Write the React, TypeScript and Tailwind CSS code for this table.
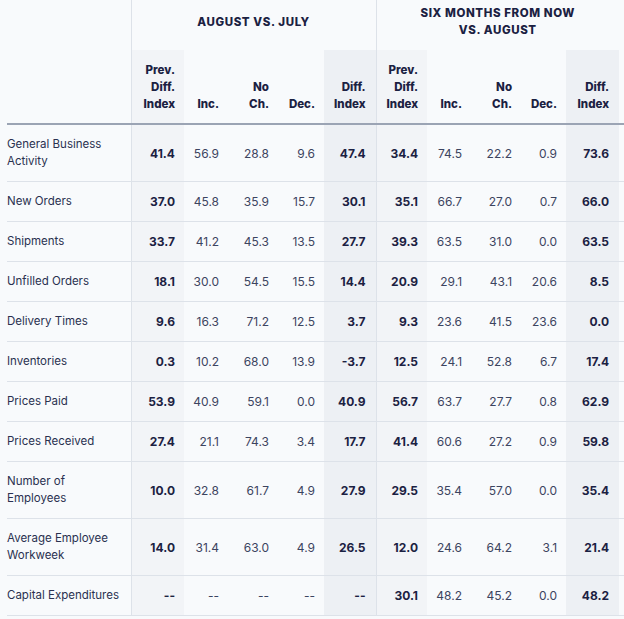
import React from 'react';

type Row = {
  label: string[];
  a: string[];
  b: string[];
};

const rows: Row[] = [
  { label: ['General Business', 'Activity'], a: ['41.4', '56.9', '28.8', '9.6', '47.4'], b: ['34.4', '74.5', '22.2', '0.9', '73.6'] },
  { label: ['New Orders'], a: ['37.0', '45.8', '35.9', '15.7', '30.1'], b: ['35.1', '66.7', '27.0', '0.7', '66.0'] },
  { label: ['Shipments'], a: ['33.7', '41.2', '45.3', '13.5', '27.7'], b: ['39.3', '63.5', '31.0', '0.0', '63.5'] },
  { label: ['Unfilled Orders'], a: ['18.1', '30.0', '54.5', '15.5', '14.4'], b: ['20.9', '29.1', '43.1', '20.6', '8.5'] },
  { label: ['Delivery Times'], a: ['9.6', '16.3', '71.2', '12.5', '3.7'], b: ['9.3', '23.6', '41.5', '23.6', '0.0'] },
  { label: ['Inventories'], a: ['0.3', '10.2', '68.0', '13.9', '-3.7'], b: ['12.5', '24.1', '52.8', '6.7', '17.4'] },
  { label: ['Prices Paid'], a: ['53.9', '40.9', '59.1', '0.0', '40.9'], b: ['56.7', '63.7', '27.7', '0.8', '62.9'] },
  { label: ['Prices Received'], a: ['27.4', '21.1', '74.3', '3.4', '17.7'], b: ['41.4', '60.6', '27.2', '0.9', '59.8'] },
  { label: ['Number of', 'Employees'], a: ['10.0', '32.8', '61.7', '4.9', '27.9'], b: ['29.5', '35.4', '57.0', '0.0', '35.4'] },
  { label: ['Average Employee', 'Workweek'], a: ['14.0', '31.4', '63.0', '4.9', '26.5'], b: ['12.0', '24.6', '64.2', '3.1', '21.4'] },
  { label: ['Capital Expenditures'], a: ['--', '--', '--', '--', '--'], b: ['30.1', '48.2', '45.2', '0.0', '48.2'] },
];

const subHeads = [['Prev.', 'Diff.', 'Index'], ['Inc.'], ['No', 'Ch.'], ['Dec.'], ['Diff.', 'Index']];

// per-column cell styling inside one group (prev, inc, noch, dec, diff)
const cellCls = [
  'border-l border-[#dde2e9] bg-[#f2f4f7] font-bold text-[#1b2142] pr-[9px]',
  'text-[#3c4460] pr-[9px]',
  'text-[#3c4460] pr-[9px]',
  'text-[#3c4460] pr-[9px]',
  'bg-[#edf0f4] font-bold text-[#1b2142] pr-[10px]',
];

const headCls = [
  'border-l border-[#dde2e9] bg-[#f2f4f7] pr-[9px]',
  'pr-[9px]',
  'pr-[9px]',
  'pr-[9px]',
  'bg-[#edf0f4] pr-[10px]',
];

function Group({ values }: { values: string[] }) {
  return (
    <>
      {values.map((v, i) => (
        <td key={i} className={`text-right align-middle ${cellCls[i]}`}>
          {v}
        </td>
      ))}
    </>
  );
}

export default function App() {
  return (
    <div
      className="min-h-[619px] w-[624px] overflow-hidden bg-[#f8fafc] text-[12px] leading-[17px] text-[#1b2142]"
      style={{ fontFamily: 'Inter, "Liberation Sans", sans-serif' }}
    >
      <table className="ml-[7px] w-[617px] table-fixed border-collapse">
        <colgroup>
          <col className="w-[124px]" />
          <col className="w-[53px]" />
          <col className="w-[44px]" />
          <col className="w-[50px]" />
          <col className="w-[46px]" />
          <col className="w-[52px]" />
          <col className="w-[51px]" />
          <col className="w-[44px]" />
          <col className="w-[50px]" />
          <col className="w-[45px]" />
          <col className="w-[53px]" />
          <col className="w-[5px]" />
        </colgroup>
        <thead>
          <tr className="h-[50px]">
            <th rowSpan={2} />
            <th colSpan={5} className="border-l border-[#dde2e9] pb-[6px] text-center align-middle text-[11.5px] font-extrabold uppercase tracking-[0.6px]">
              August vs. July
            </th>
            <th colSpan={5} className="border-l border-[#dde2e9] pb-[6px] text-center align-middle text-[11.5px] font-extrabold uppercase tracking-[0.6px]">
              Six months from now
              <br />
              vs. August
            </th>
            <th />
          </tr>
          <tr className="border-b-2 border-[#9ba4b4]">
            {[0, 1].map((g) =>
              subHeads.map((lines, i) => (
                <th
                  key={`${g}-${i}`}
                  className={`pt-[12px] pb-[10px] text-right align-bottom text-[11.5px] font-extrabold ${headCls[i]}`}
                >
                  {lines.map((l, k) => (
                    <div key={k}>{l}</div>
                  ))}
                </th>
              ))
            )}
            <th />
          </tr>
        </thead>
        <tbody>
          {rows.map((r) => (
            <tr key={r.label.join(' ')} className="border-b border-[#dde2e9]">
              <td className="whitespace-nowrap py-[11px] pr-1 align-middle text-[11.5px] text-[#2a3150]">
                {r.label.map((l, k) => (
                  <div key={k}>{l}</div>
                ))}
              </td>
              <Group values={r.a} />
              <Group values={r.b} />
              <td />
            </tr>
          ))}
        </tbody>
      </table>
    </div>
  );
}
